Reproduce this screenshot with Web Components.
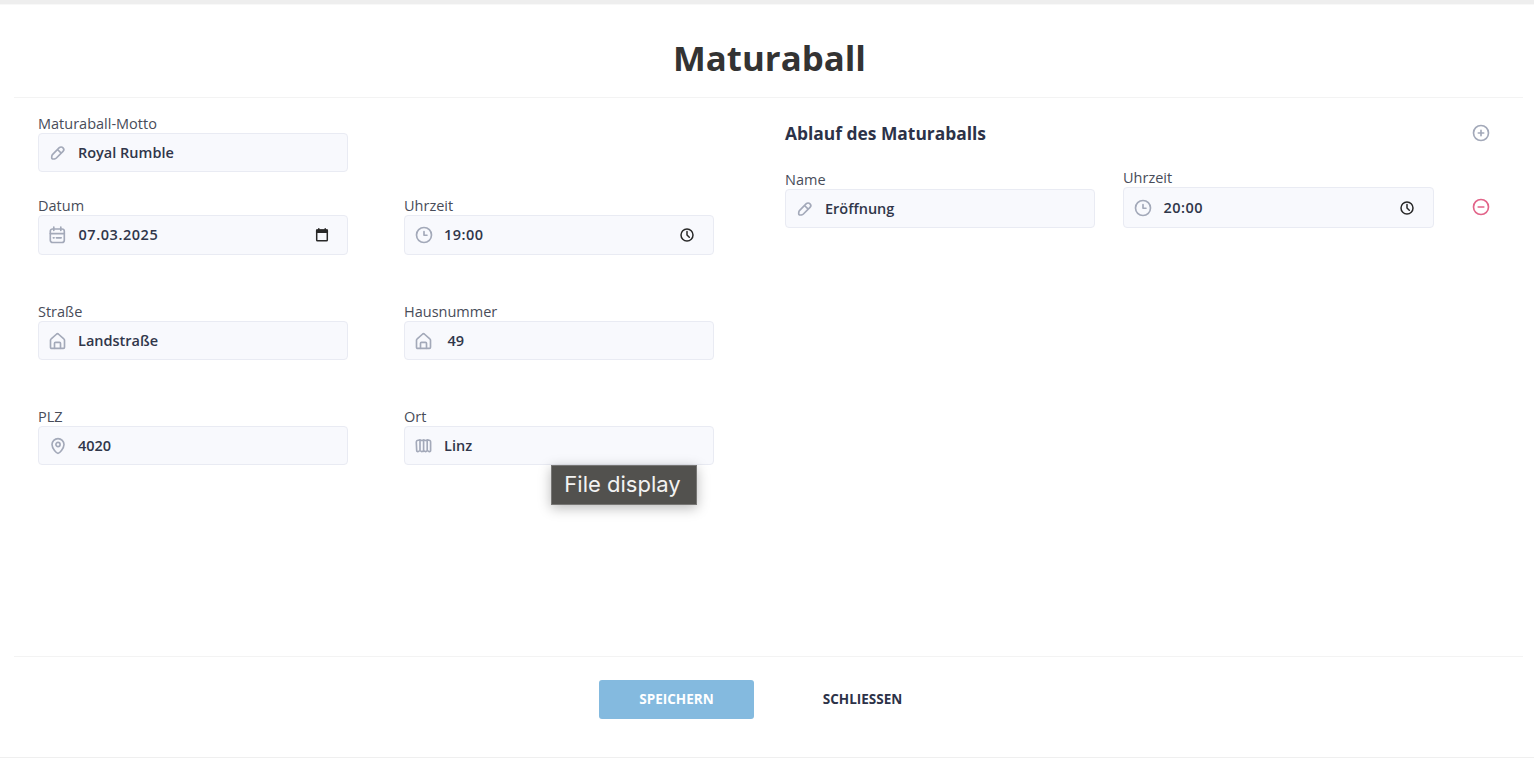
<!DOCTYPE html>
<html lang="de">
<head>
<meta charset="utf-8">
<title>Maturaball</title>
<style>
html,body{margin:0;height:100%;overflow:hidden}
body{font-family:"Open Sans","Noto Sans",sans-serif;background:#fff;color:#2c3248}
</style>
</head>
<body>
<ball-dialog></ball-dialog>
<script>
const ICONS = {
  pencil: '<svg width="16" height="16" viewBox="0 0 16 16"><path d="M9.300 2.700 2.700 9.300c-.5.500-.8 1.100-.9 1.800l-.1 1.500c-.1.900.6 1.500 1.400 1.400l1.500-.1c.7-.1 1.300-.4 1.800-.9L13 6.400c1-1 1-2.600 0-3.600s-2.700-1.100-3.700-.1zM7.500 4.500l3.700 3.700"/></svg>',
  calendar: '<svg width="17" height="18" viewBox="0 0 17 18"><rect x="1.300" y="3" width="14" height="13.500" rx="2.300"/><path d="M1.300 7.600h14M4.800 1v3.400M11.800 1v3.400M4.300 11.800h.8M7.400 11.800h4.800"/></svg>',
  clock: '<svg width="18" height="18" viewBox="0 0 18 18"><circle cx="9" cy="9" r="7.500"/><path d="M9 5.500v3.700h3"/></svg>',
  home: '<svg width="17" height="18" viewBox="0 0 17 18"><path d="M1.500 8.300c0-.6.200-1 .7-1.400L7.700 2c.5-.4 1.100-.4 1.600 0l5.500 4.900c.5.400.7.800.7 1.400v7c0 .7-.4 1.100-1.100 1.100H2.600c-.7 0-1.100-.4-1.100-1.100z"/><path d="M5.500 16.300v-5c0-.7.300-1 1-1h4c.7 0 1 .3 1 1v5"/></svg>',
  pin: '<svg width="16" height="18" viewBox="0 0 16 18"><path d="M8 16.300c-1.300 0-6-4.700-6-8.700a6 6 0 0 1 12 0c0 4-4.700 8.700-6 8.700z"/><circle cx="8" cy="7.500" r="2.100"/></svg>',
  map: '<svg width="17" height="16" viewBox="0 0 17 16"><path d="M1.300 4.200c0-1.300.8-2 1.800-2s1.100-.5 1.900-.5 1.200.8 1.900.8 1.100-.8 1.800-.8 1.200.8 1.900.8 1.100-.8 1.800-.8 1.100.5 1.700.5c.8 0 1.500.7 1.500 2v8.300c0 .9-.6 1.300-1.300 1.100-.8-.2-1.200-.9-1.900-.9s-1 .9-1.800.9-1-.9-1.900-.9-1 .9-1.800.9-1-.9-1.900-.9-1.200.7-2 .9c-.7.200-1.300-.2-1.300-1.100zM5 2v10.500M8.600 2v11.400M12.200 2v10.500"/></svg>',
  plus: '<svg width="18" height="18" viewBox="0 0 18 18"><circle cx="9" cy="9" r="7.500"/><path d="M9 6.300v5.400M6.300 9h5.400"/></svg>',
  minus: '<svg width="18" height="18" viewBox="0 0 18 18"><circle cx="9" cy="9" r="7.500"/><path d="M6.200 9h5.600"/></svg>',
  datepick: '<svg width="14" height="14" viewBox="0 0 14 14"><rect x="1.700" y="2.200" width="10.600" height="10.600" rx=".8"/><path d="M1.700 2h10.600v2.300H1.700z" fill="currentColor"/><path d="M3.800.8v2M10.200.8v2"/></svg>',
  timepick: '<svg width="16" height="16" viewBox="0 0 16 16"><circle cx="8" cy="8" r="6"/><path d="M8 4.500V8l2.300 2.300"/></svg>'
};
function define(name, css, html) {
  customElements.define(name, class extends HTMLElement {
    constructor() {
      super();
      this.attachShadow({mode: 'open'}).innerHTML = '<style>' + css + '</style>' + html(this);
    }
  });
}
define('ui-icon', ':host{display:inline-flex;align-items:center;justify-content:center;flex:none;color:#a3a9b9}svg{display:block;fill:none;stroke:currentColor;stroke-width:var(--stroke,1.65);stroke-linecap:round;stroke-linejoin:round}',
  el => ICONS[el.getAttribute('name')]);

define('form-field', `
  :host{display:block;width:310px}
  label{display:block;height:20px;line-height:22px;font-size:14.500px;color:#484c59;white-space:nowrap}
  .box{box-sizing:border-box;height:var(--box-height,39px);display:flex;align-items:center;background:#f8f9fd;border:1px solid #e9ebf3;border-radius:4px;padding:0 18px 0 8.500px}
  .lead{width:20px;margin-right:var(--gap,10.500px)}
  .value{flex:1;font-size:14.500px;font-weight:600;color:#30364a;line-height:20px;white-space:nowrap;letter-spacing:var(--value-spacing,0)}
  .pick{width:16px;color:#282828;--stroke:1.500}
  .pick[name=datepick]{margin-right:-1px}`,
  el => `<label>${el.getAttribute('label')}</label><div class="box"><ui-icon class="lead" name="${el.getAttribute('icon')}"></ui-icon><span class="value"><slot></slot></span>${el.hasAttribute('picker') ? `<ui-icon class="pick" name="${el.getAttribute('picker')}"></ui-icon>` : ''}</div>`);

define('push-button', `
  :host{display:block}
  button{display:block;width:155px;height:39px;margin:0;padding:0;border:0;border-radius:3px;background:transparent;color:#2c3248;font:700 13.500px/39px "Open Sans",sans-serif}
  :host([primary]) button{background:#84badf;color:#fff}`,
  () => '<button><slot></slot></button>');

define('tool-tip', `
  :host{box-sizing:border-box;display:block;width:146px;height:40px;background:#52514e;border:1px solid #777674;box-shadow:0 3px 12px rgba(0,0,0,.28);color:#f3f3f2;font:400 22px/37px Inter,sans-serif;text-align:center;white-space:nowrap;padding-right:3px}`,
  () => '<slot></slot>');

define('ball-dialog', `
  :host{box-sizing:border-box;display:flex;flex-direction:column;height:758px;border-top:4px solid #eee;border-bottom:1px solid #efefef;padding:0 11px 0 14px;box-shadow:inset 0 1px #f8f8f8}
  header{height:93px;border-bottom:1px solid #f3f3f3;display:flex;justify-content:center}
  h1{margin:0;padding-left:2px;font-size:34.800px;line-height:108px;font-weight:700;color:#333}
  main{flex:1;display:flex;padding:0 0 0 24px}
  .left{display:grid;grid-template-columns:310px 310px;column-gap:56px;grid-template-rows:82px 106px 105px auto;padding-top:15px;width:747px;box-sizing:border-box;align-content:start}
  .date{--box-height:40px;--value-spacing:.55px;--gap:11px}
  .right{width:720px}
  .head{display:flex;justify-content:space-between;align-items:center;height:30px;padding-top:20px;width:705px}
  h2{margin:0;font-size:17.400px;line-height:30px;font-weight:700;color:#2c3248}
  .entry{display:flex;align-items:flex-start;width:705px;padding-top:19px}
  .name{margin:2px 28px 0 0}
  .del{margin:31px 0 0 auto;color:#e26489}
  .wide{width:311px;--box-height:41px;--value-spacing:.5px;--gap:11px}
  .time{--box-height:40px;--value-spacing:.5px}
  .place{position:relative}
  tool-tip{position:absolute;left:147px;top:59px}
  footer{height:101px;border-top:1px solid #f3f3f3;display:flex;padding:23px 0 0 585px;box-sizing:border-box;gap:31px}`,
  () => `
  <header><h1>Maturaball</h1></header>
  <main>
    <section class="left">
      <form-field label="Maturaball-Motto" icon="pencil">Royal Rumble</form-field><span></span>
      <form-field class="date" label="Datum" icon="calendar" picker="datepick">07.03.2025</form-field>
      <form-field class="time" label="Uhrzeit" icon="clock" picker="timepick">19:00</form-field>
      <form-field label="Straße" icon="home">Landstraße</form-field>
      <form-field label="Hausnummer" icon="home" style="--gap:14px">49</form-field>
      <form-field label="PLZ" icon="pin">4020</form-field>
      <div class="place"><form-field label="Ort" icon="map">Linz</form-field><tool-tip>File display</tool-tip></div>
    </section>
    <section class="right">
      <div class="head"><h2>Ablauf des Maturaballs</h2><ui-icon name="plus"></ui-icon></div>
      <div class="entry">
        <form-field class="name" label="Name" icon="pencil">Eröffnung</form-field>
        <form-field class="wide" label="Uhrzeit" icon="clock" picker="timepick">20:00</form-field>
        <ui-icon class="del" name="minus"></ui-icon>
      </div>
    </section>
  </main>
  <footer><push-button primary>SPEICHERN</push-button><push-button>SCHLIESSEN</push-button></footer>`);
</script>
</body>
</html>
